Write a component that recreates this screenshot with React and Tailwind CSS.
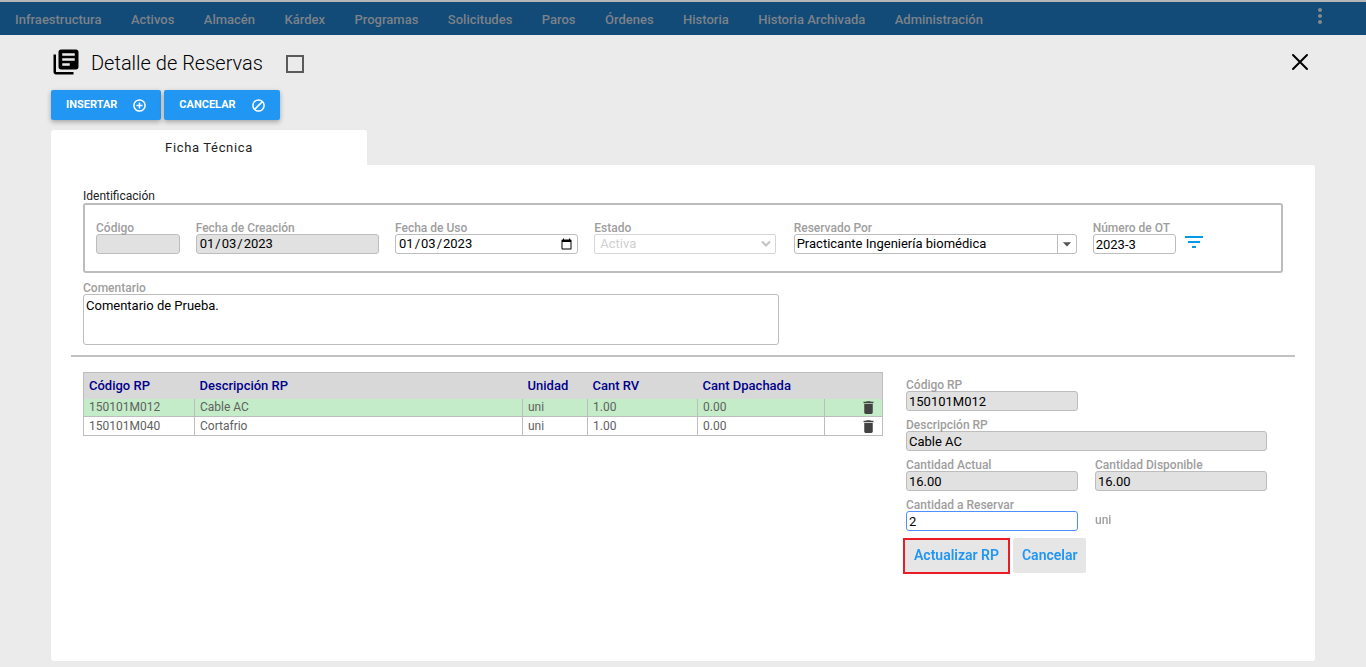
import React, { useState } from "react";
import {
  MdLibraryBooks,
  MdDelete,
  MdFilterList,
  MdMoreVert,
  MdArrowDropDown,
} from "react-icons/md";

const menu = [
  "Infraestructura",
  "Activos",
  "Almacén",
  "Kárdex",
  "Programas",
  "Solicitudes",
  "Paros",
  "Órdenes",
  "Historia",
  "Historia Archivada",
  "Administración",
];

const items = [
  { code: "150101M012", name: "Cable AC", unit: "uni", reserved: "1.00", sent: "0.00" },
  { code: "150101M040", name: "Cortafrio", unit: "uni", reserved: "1.00", sent: "0.00" },
];

const inputBase =
  "block w-full h-5 rounded-[3px] border border-[#bdbdbd] px-[2px] py-0 text-[13px] leading-[18px] text-black outline-none";

function Field({ id, label, className = "", children }) {
  return (
    <div className={className}>
      <label
        htmlFor={id}
        className="block h-[14px] whitespace-nowrap text-[12px] leading-4 font-medium text-[#9e9e9e]"
      >
        {label}
      </label>
      {children}
    </div>
  );
}

function TextInput({ readOnly, ...props }) {
  return (
    <input
      type="text"
      readOnly={readOnly}
      className={`${inputBase} ${readOnly ? "bg-[#e1e1e1]" : "bg-white focus:border-[#4d90fe]"}`}
      {...props}
    />
  );
}

function CircleIcon({ d }) {
  return (
    <svg width="13" height="13" viewBox="0 0 13 13" fill="none" stroke="currentColor" strokeWidth="1.5">
      <circle cx="6.5" cy="6.5" r="5.6" />
      <path d={d} />
    </svg>
  );
}

function Navbar() {
  return (
    <nav className="flex h-[35px] items-center justify-between border-t-2 border-[#b4b6b8] bg-[#124a78] pl-[15px] pr-[34px]">
      <ul className="flex w-full max-w-[968px] justify-between">
        {menu.map((name) => (
          <li key={name}>
            <a href="#" className="whitespace-nowrap text-[13px] font-medium text-[#7c8288]">
              {name}
            </a>
          </li>
        ))}
      </ul>
      <button type="button" aria-label="Más opciones" className="self-start pt-[2px] text-[#858a8f]">
        <MdMoreVert size={24} />
      </button>
    </nav>
  );
}

function Identification() {
  const [user, setUser] = useState("Practicante Ingeniería biomédica");

  return (
    <section aria-labelledby="ident">
      <h2 id="ident" className="text-[12px] leading-[14px] text-[#222]">
        Identificación
      </h2>
      <div className="grid grid-cols-12 gap-x-4 rounded-[3px] border-2 border-[#bdbdbd] pt-[15px] pr-[5px] pb-[17px] pl-[11px]">
        <Field id="codigo" label="Código">
          <TextInput id="codigo" readOnly />
        </Field>
        <Field id="creacion" label="Fecha de Creación" className="col-span-2">
          <input
            id="creacion"
            type="date"
            readOnly
            defaultValue="2023-01-03"
            className={`${inputBase} bg-[#e1e1e1] [&::-webkit-calendar-picker-indicator]:hidden`}
          />
        </Field>
        <Field id="uso" label="Fecha de Uso" className="col-span-2">
          <input
            id="uso"
            type="date"
            defaultValue="2023-01-03"
            className={`${inputBase} bg-white`}
          />
        </Field>
        <Field id="estado" label="Estado" className="col-span-2 pr-[2px]">
          <div className="relative">
            <select
              id="estado"
              disabled
              className="block h-5 w-full appearance-none rounded-[2px] border border-[#d6d6d6] bg-white pl-[5px] text-[13px] leading-[18px] text-[#d0d0d0]"
            >
              <option>Activa</option>
            </select>
            <svg
              width="10"
              height="8"
              viewBox="0 0 10 8"
              fill="none"
              stroke="#c4c4c4"
              strokeWidth="2"
              className="pointer-events-none absolute top-[6px] right-[5px]"
            >
              <path d="M1 1.5 5 5.5 9 1.5" />
            </svg>
          </div>
        </Field>
        <Field id="reservado" label="Reservado Por" className="col-span-3">
          <div className="flex h-5 overflow-hidden rounded-[3px] border border-[#bdbdbd]">
            <input
              id="reservado"
              type="text"
              value={user}
              onChange={(e) => setUser(e.target.value)}
              className="min-w-0 flex-1 px-[2px] text-[13px] leading-[18px] text-black outline-none"
            />
            <button
              type="button"
              aria-label="Mostrar usuarios"
              className="flex w-[19px] items-center justify-center border-l border-[#bdbdbd] text-[#555]"
            >
              <MdArrowDropDown size={20} className="shrink-0" />
            </button>
          </div>
        </Field>
        <Field id="ot" label="Número de OT">
          <TextInput id="ot" defaultValue="2023-3" />
        </Field>
        <button type="button" aria-label="Filtrar OT" className="-ml-[10px] self-end justify-self-start text-[#039be5]">
          <MdFilterList size={24} />
        </button>
      </div>
    </section>
  );
}

function ItemsTable() {
  return (
    <table className="w-full table-fixed border-collapse border border-[#bdbdbd] text-left">
      <colgroup>
        <col className="w-[111px]" />
        <col />
        <col className="w-[65px]" />
        <col className="w-[110px]" />
        <col className="w-[127px]" />
        <col className="w-[58px]" />
      </colgroup>
      <thead>
        <tr className="h-[26px] bg-[#d8d8d8] text-[13px] leading-[18px] text-[#00008b]">
          {["Código RP", "Descripción RP", "Unidad", "Cant RV", "Cant Dpachada"].map((h) => (
            <th key={h} className="px-[5px] py-0 font-medium whitespace-nowrap">
              {h}
            </th>
          ))}
          <th aria-label="Acciones" />
        </tr>
      </thead>
      <tbody>
        {items.map((item, i) => (
          <tr
            key={item.code}
            className={`border-b border-[#bdbdbd] text-[12px] leading-4 text-[#616161] ${
              i === 0 ? "h-[18px] bg-[#c5ecc8]" : "h-[19px] bg-white"
            }`}
          >
            {[item.code, item.name, item.unit, item.reserved, item.sent].map((value, n) => (
              <td key={n} className="border-r border-[#bdbdbd] px-[5px] py-0">
                {value}
              </td>
            ))}
            <td className="py-0 pr-[5px]">
              <button type="button" aria-label={`Eliminar ${item.name}`} className="ml-auto block text-[#424242]">
                <MdDelete size={17} />
              </button>
            </td>
          </tr>
        ))}
      </tbody>
    </table>
  );
}

function ItemForm() {
  return (
    <form onSubmit={(e) => e.preventDefault()}>
      <div className="grid grid-cols-2 gap-x-[17px] gap-y-[6px]">
        <Field id="rp-codigo" label="Código RP">
          <TextInput id="rp-codigo" readOnly defaultValue="150101M012" />
        </Field>
        <Field id="rp-desc" label="Descripción RP" className="col-span-2">
          <TextInput id="rp-desc" readOnly defaultValue="Cable AC" />
        </Field>
        <Field id="rp-actual" label="Cantidad Actual">
          <TextInput id="rp-actual" readOnly defaultValue="16.00" />
        </Field>
        <Field id="rp-disp" label="Cantidad Disponible">
          <TextInput id="rp-disp" readOnly defaultValue="16.00" />
        </Field>
        <Field id="rp-cant" label="Cantidad a Reservar">
          <TextInput
            id="rp-cant"
            defaultValue="2"
            autoFocus
            onFocus={(e) => e.target.setSelectionRange(1, 1)}
          />
        </Field>
        <span className="self-end pb-[3px] text-[12px] leading-4 font-medium text-[#9e9e9e]">uni</span>
      </div>
      <div className="-ml-[3px] mt-[7px] flex gap-[3px]">
        <button
          type="submit"
          className="h-9 border-2 border-[#ed1c24] bg-[#e6e6e6] px-[9px] pb-px text-[14px] font-semibold whitespace-nowrap text-[#2196f3]"
        >
          Actualizar RP
        </button>
        <button
          type="button"
          className="h-[35px] rounded-[2px] bg-[#e6e6e6] px-[9px] pb-px text-[14px] font-semibold text-[#2196f3]"
        >
          Cancelar
        </button>
      </div>
    </form>
  );
}

export default function App() {
  const actionButton =
    "flex h-[30px] items-center gap-4 rounded-[2px] bg-[#2196f3] px-[15px] text-[11px] leading-4 font-bold text-white shadow-[0_2px_5px_rgba(0,0,0,0.3)]";

  return (
    <div className="flex min-h-screen flex-col bg-[#ebebeb] font-['Roboto',sans-serif]">
      <Navbar />
      <main className="flex flex-1 flex-col px-[51px] pt-3 pb-[6px]">
        {/* Title */}
        <header className="flex h-[30px] items-center">
          <MdLibraryBooks size={30} />
          <h1 className="ml-[10px] pt-[2px] text-[20px] font-light text-black">Detalle de Reservas</h1>
          <input
            type="checkbox"
            aria-label="Seleccionar reserva"
            className="mt-1 ml-[23px] size-[18px] appearance-none border-2 border-[#5a5a5a]"
          />
          <button type="button" aria-label="Cerrar" className="mr-[6px] ml-auto">
            <svg width="18" height="18" viewBox="0 0 18 18" stroke="#000" strokeWidth="2" strokeLinecap="round">
              <path d="M2 2 16 16M16 2 2 16" />
            </svg>
          </button>
        </header>

        <div className="mt-[13px] flex gap-[3px]">
          <button type="button" className={actionButton}>
            INSERTAR
            <CircleIcon d="M6.5 3.5v6M3.5 6.5h6" />
          </button>
          <button type="button" className={actionButton}>
            CANCELAR
            <CircleIcon d="M2.6 10.4 10.4 2.6" />
          </button>
        </div>

        {/* Tab */}
        <div role="tablist" className="mt-[10px] flex">
          <button
            type="button"
            role="tab"
            aria-selected="true"
            className="h-[35px] w-1/4 rounded-t-[3px] bg-white text-[13px] tracking-wider text-[#222]"
          >
            Ficha Técnica
          </button>
        </div>

        <div className="flex-1 rounded-r-[3px] rounded-b-[3px] bg-white px-8 pt-6 pb-8">
          <Identification />
          <Field id="comentario" label="Comentario" className="mt-[7px] w-[58%]">
            <textarea
              id="comentario"
              defaultValue="Comentario de Prueba."
              className="block h-[51px] w-full resize-none rounded-[3px] border border-[#bdbdbd] px-[2px] py-[3px] text-[13px] leading-4 text-black outline-none"
            />
          </Field>
          <hr className="-mx-3 mt-[10px] border-t-2 border-[#c2c0c0]" />
          <div className="mt-[15px] flex">
            <div className="w-2/3">
              <ItemsTable />
            </div>
            <div className="w-1/3 pt-[5px] pr-4 pl-[23px]">
              <ItemForm />
            </div>
          </div>
        </div>
      </main>
    </div>
  );
}
